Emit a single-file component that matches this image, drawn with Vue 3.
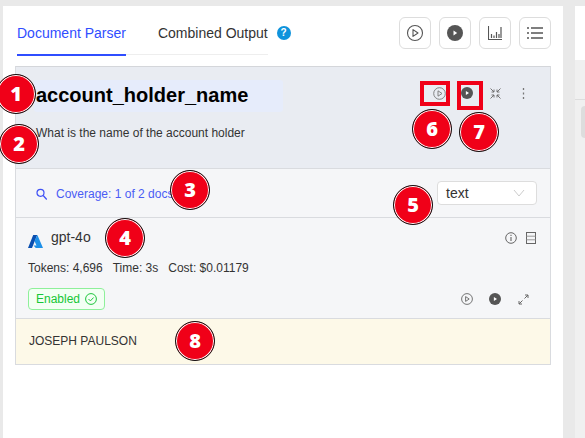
<script setup>
const badges = [
  { n: 1, cls: 'b1' }, { n: 2, cls: 'b2' }, { n: 3, cls: 'b3' }, { n: 4, cls: 'b4' },
  { n: 5, cls: 'b5' }, { n: 6, cls: 'b6' }, { n: 7, cls: 'b7' }, { n: 8, cls: 'b8' }
]
</script>

<template>
  <div class="page">
    <main class="panel">
      <header class="top">
        <nav class="tabs">
          <span class="tab active">Document Parser</span>
          <span class="tab">Combined Output</span>
        </nav>
        <span class="help">?</span>
        <div class="actions">
          <button class="act">
            <svg width="18" height="18" viewBox="0 0 18 18"><circle cx="9" cy="9" r="7.5" fill="none" stroke="#555" stroke-width="1.1"/><path d="M7 5.6 12 9l-5 3.4z" fill="none" stroke="#555" stroke-width="1.1" stroke-linejoin="round"/></svg>
          </button>
          <button class="act">
            <svg width="18" height="18" viewBox="0 0 18 18"><circle cx="9" cy="9" r="8" fill="#555"/><path d="M7.5 6.6 11.2 9l-3.7 2.4z" fill="#fff"/></svg>
          </button>
          <button class="act">
            <svg width="14" height="14" viewBox="0 0 14 14"><path d="M.5 0v13.5H14" fill="none" stroke="#555" stroke-width="1.1"/><path d="M3.5 8v4M6 9.5V12M8.5 6v6M11 8v4M13 1v11" fill="none" stroke="#555" stroke-width="1.2"/></svg>
          </button>
          <button class="act">
            <svg width="16" height="14" viewBox="0 0 16 14"><path d="M4 2h12M4 7h12M4 12h12M0 2h2M0 7h2M0 12h2" fill="none" stroke="#555" stroke-width="1.5"/></svg>
          </button>
        </div>
      </header>

      <section class="card">
        <div class="prompt">
          <div class="prompt-head">
            <h1 class="name">account_holder_name</h1>
            <div class="prompt-icons">
              <span class="slot"><svg width="13" height="13" viewBox="0 0 13 13"><circle cx="6.5" cy="6.5" r="5.8" fill="none" stroke="#777" stroke-width=".9"/><path d="M5 3.8 9 6.5 5 9.2z" fill="none" stroke="#777" stroke-width=".9"/></svg></span>
              <span class="slot"><svg width="12" height="12" viewBox="0 0 12 12"><circle cx="6" cy="6" r="6" fill="#555"/><path d="M4.9 3.9 8 6 4.9 8.1z" fill="#fff"/></svg></span>
              <span class="slot"><svg width="11" height="11" viewBox="0 0 11 11"><path d="M.5.5 4 4M4 1.5V4H1.5M10.5.5 7 4M7 1.5V4h2.5M.5 10.5 4 7M1.5 7H4v2.5M10.5 10.5 7 7M9.5 7H7v2.5" fill="none" stroke="#666" stroke-width=".9"/></svg></span>
              <span class="slot"><svg width="3" height="11" viewBox="0 0 3 11"><path d="M1.5 0v2M1.5 4.5v2M1.5 9v2" stroke="#777" stroke-width="1.3"/></svg></span>
            </div>
          </div>
          <p class="desc">What is the name of the account holder</p>
        </div>

        <div class="coverage-row">
          <div class="coverage">
            <svg width="11" height="12" viewBox="0 0 11 12"><circle cx="4.5" cy="4.8" r="3.5" fill="none" stroke="#3f51f5" stroke-width="1.2"/><path d="m7.2 7.5 3.6 4" stroke="#3f51f5" stroke-width="1.3"/></svg>
            <span>Coverage: 1 of 2 docs</span>
          </div>
          <div class="select">
            <span>text</span>
            <svg width="12" height="8" viewBox="0 0 12 8"><path d="m1 1 5 6 5-6" fill="none" stroke="#ccc" stroke-width="1"/></svg>
          </div>
        </div>

        <div class="model">
          <div class="model-head">
            <div class="model-name">
              <svg class="azure" width="15" height="13" viewBox="0 0 15 13"><path d="M5.2 0h4L4 13H0z" fill="#0a4fb0"/><path d="M9.4 0 15 13H7.8L5.5 10.6l3-.1L6.5 6z" fill="#1e90e8"/></svg>
              <span>gpt-4o</span>
            </div>
            <div class="model-tools">
              <svg width="12" height="12" viewBox="0 0 12 12"><circle cx="6" cy="6" r="5.3" fill="none" stroke="#666"/><path d="M6 5v4M6 2.8v1.2" stroke="#666" stroke-width="1.1"/></svg>
              <svg width="10" height="12" viewBox="0 0 10 12"><rect x=".5" y=".5" width="9" height="11" fill="none" stroke="#666"/><path d="M.5 4.2h9M.5 7.8h9" stroke="#999"/></svg>
            </div>
          </div>
          <div class="stats">
            <span>Tokens: 4,696</span><span>Time: 3s</span><span>Cost: $0.01179</span>
          </div>
          <div class="model-foot">
            <span class="enabled">
              Enabled
              <svg width="12" height="12" viewBox="0 0 12 12"><circle cx="6" cy="6" r="5.4" fill="none" stroke="#1ec63c"/><path d="m3.5 6 1.9 1.9 3.2-3.4" fill="none" stroke="#1ec63c"/></svg>
            </span>
            <div class="foot-icons">
              <span class="slot"><svg width="12" height="12" viewBox="0 0 12 12"><circle cx="6" cy="6" r="5.4" fill="none" stroke="#666" stroke-width=".9"/><path d="M4.6 3.6 8.2 6 4.6 8.4z" fill="none" stroke="#666" stroke-width=".9"/></svg></span>
              <span class="slot"><svg width="12" height="12" viewBox="0 0 12 12"><circle cx="6" cy="6" r="6" fill="#555"/><path d="M4.9 3.9 8 6 4.9 8.1z" fill="#fff"/></svg></span>
              <span class="slot"><svg width="11" height="11" viewBox="0 0 11 11"><path d="M1 10 4.5 6.5M6.5 4.5 10 1M7 1H10v3M1 7V10h3" fill="none" stroke="#666"/></svg></span>
            </div>
          </div>
        </div>

        <div class="output">JOSEPH PAULSON</div>
      </section>

      <span class="mark m6"></span>
      <span class="mark m7"></span>
      <span v-for="b in badges" :key="b.n" class="badge" :class="b.cls">{{ b.n }}</span>
    </main>

    <aside class="side">
      <div class="side-top"></div>
      <div class="side-bar"></div>
      <div class="side-body"><span class="side-chip"></span></div>
    </aside>
  </div>
</template>

<style scoped>
.page {
  width: 585px;
  height: 438px;
  overflow: hidden;
  display: flex;
  gap: 12px;
  padding: 6px 0 0 3px;
  box-sizing: border-box;
  background: #e9e9e9;
  font-family: "Liberation Sans", Arial, sans-serif;
  color: #333;
}
.panel {
  position: relative;
  width: 560px;
  flex: none;
  background: #fff;
  padding: 0 12px;
  box-sizing: border-box;
}
.top {
  display: flex;
  align-items: flex-start;
  height: 60px;
}
.tabs {
  display: flex;
  margin: 10px 0 0 2px;
  height: 39px;
  box-sizing: border-box;
  border-bottom: 1px solid #eee;
}
.tab {
  font-size: 14px;
  line-height: 20px;
  padding-top: 7px;
  color: #333;
}
.tab + .tab { margin-left: 32px; }
.tab.active {
  color: #2f4dff;
  border-bottom: 2px solid #2f4dff;
  height: 31px;
}
.help {
  width: 14px;
  height: 14px;
  margin: 20px 0 0 9px;
  border-radius: 50%;
  background: #0f93dc;
  color: #fff;
  font-size: 10px;
  font-weight: 700;
  line-height: 14px;
  text-align: center;
}
.actions {
  margin: 11px 0 0 auto;
  display: flex;
  gap: 8px;
}
.act {
  width: 32px;
  height: 32px;
  padding: 0;
  border: 1px solid #ddd;
  border-radius: 6px;
  background: #fff;
  display: flex;
  align-items: center;
  justify-content: center;
}
.card {
  border: 1px solid #d9dbdf;
  border-top-color: #d4d6da;
}
.prompt {
  background: #e9ecf2;
  height: 102px;
  padding: 13px 17px 0 18px;
  box-sizing: border-box;
  border-bottom: 1px solid #d9dbdf;
}
.prompt-head {
  display: flex;
  justify-content: space-between;
  align-items: flex-start;
}
.name {
  margin: 0;
  width: 249px;
  height: 32px;
  padding-left: 2px;
  box-sizing: border-box;
  font-size: 20px;
  line-height: 31px;
  font-weight: 700;
  color: #000;
  background: #e6ecfb;
  border-radius: 3px;
}
.slot {
  width: 14px;
  height: 14px;
  display: flex;
  align-items: center;
  justify-content: center;
}
.prompt-icons {
  display: flex;
  align-items: center;
  gap: 14px;
  margin-top: 6px;
  padding-right: 3px;
}
.desc {
  margin: 13px 0 0 2px;
  font-size: 12px;
  line-height: 16px;
  color: #333;
}
.coverage-row {
  height: 49px;
  background: #f5f6f8;
  display: flex;
  justify-content: space-between;
  padding: 12px 13px 0 20px;
  box-sizing: border-box;
  border-bottom: 1px solid #d9dbdf;
}
.coverage {
  display: flex;
  align-items: center;
  gap: 9px;
  height: 26px;
  font-size: 12px;
  color: #4a5cf5;
}
.select {
  width: 100px;
  height: 24px;
  box-sizing: border-box;
  background: #fff;
  border: 1px solid #ddd;
  border-radius: 4px;
  padding: 0 11px 0 8px;
  display: flex;
  align-items: center;
  justify-content: space-between;
  font-size: 14px;
  color: #333;
}
.model {
  height: 101px;
  background: #f5f6f8;
  padding: 9px 14px 0 12px;
  box-sizing: border-box;
  border-bottom: 1px solid #d9dbdf;
}
.model-head {
  display: flex;
  justify-content: space-between;
}
.model-name {
  display: flex;
  align-items: flex-start;
  font-size: 14px;
  line-height: 20px;
  gap: 8px;
}
.azure { margin-top: 8px; }
.model-tools {
  display: flex;
  gap: 9px;
  padding-top: 5px;
}
.stats {
  margin-top: 12px;
  display: flex;
  gap: 10px;
  font-size: 12px;
  line-height: 16px;
}
.model-foot {
  margin-top: 12px;
  display: flex;
  justify-content: space-between;
  align-items: center;
}
.enabled {
  display: flex;
  align-items: center;
  gap: 5px;
  height: 22px;
  padding: 0 7px;
  box-sizing: border-box;
  background: #f3fff4;
  border: 1px solid #8ef09a;
  border-radius: 4px;
  font-size: 12px;
  color: #16c737;
}
.foot-icons {
  display: flex;
  gap: 14px;
  align-items: center;
  padding-right: 6px;
}
.output {
  height: 45px;
  background: #fdf9e8;
  padding-left: 13px;
  font-size: 12px;
  line-height: 45px;
  color: #333;
}
.mark {
  position: absolute;
  box-sizing: border-box;
  border: 4px solid #f00018;
}
.m6 { left: 417px; top: 75px; width: 30px; height: 25px; }
.m7 { left: 454px; top: 75px; width: 26px; height: 29px; }
.badge {
  position: absolute;
  width: 40px;
  height: 40px;
  box-sizing: border-box;
  border-radius: 50%;
  background: #f00018;
  border: 1px solid #111;
  box-shadow: inset 0 0 0 1px #fff;
  color: #fff;
  font-family: "Open Sans", sans-serif;
  font-weight: 800;
  font-size: 20px;
  line-height: 38px;
  text-align: center;
}
.b1 { left: -7px; top: 68px; }
.b2 { left: -4px; top: 118px; }
.b3 { left: 167px; top: 164px; }
.b4 { left: 102px; top: 212px; }
.b5 { left: 390px; top: 179px; }
.b6 { left: 409px; top: 103px; }
.b7 { left: 456px; top: 106px; }
.b8 { left: 172px; top: 315px; }
.side {
  flex: 1;
  display: flex;
  flex-direction: column;
}
.side-top { height: 54px; background: #fff; }
.side-bar { height: 40px; box-sizing: border-box; background: #f0f0f0; border-bottom: 1px solid #ddd; }
.side-body { flex: 1; background: #f0f0f0; padding-top: 6px; }
.side-chip { display: block; width: 10px; height: 32px; margin-left: 6px; border-radius: 4px 0 0 4px; background: #ddd; }
</style>
